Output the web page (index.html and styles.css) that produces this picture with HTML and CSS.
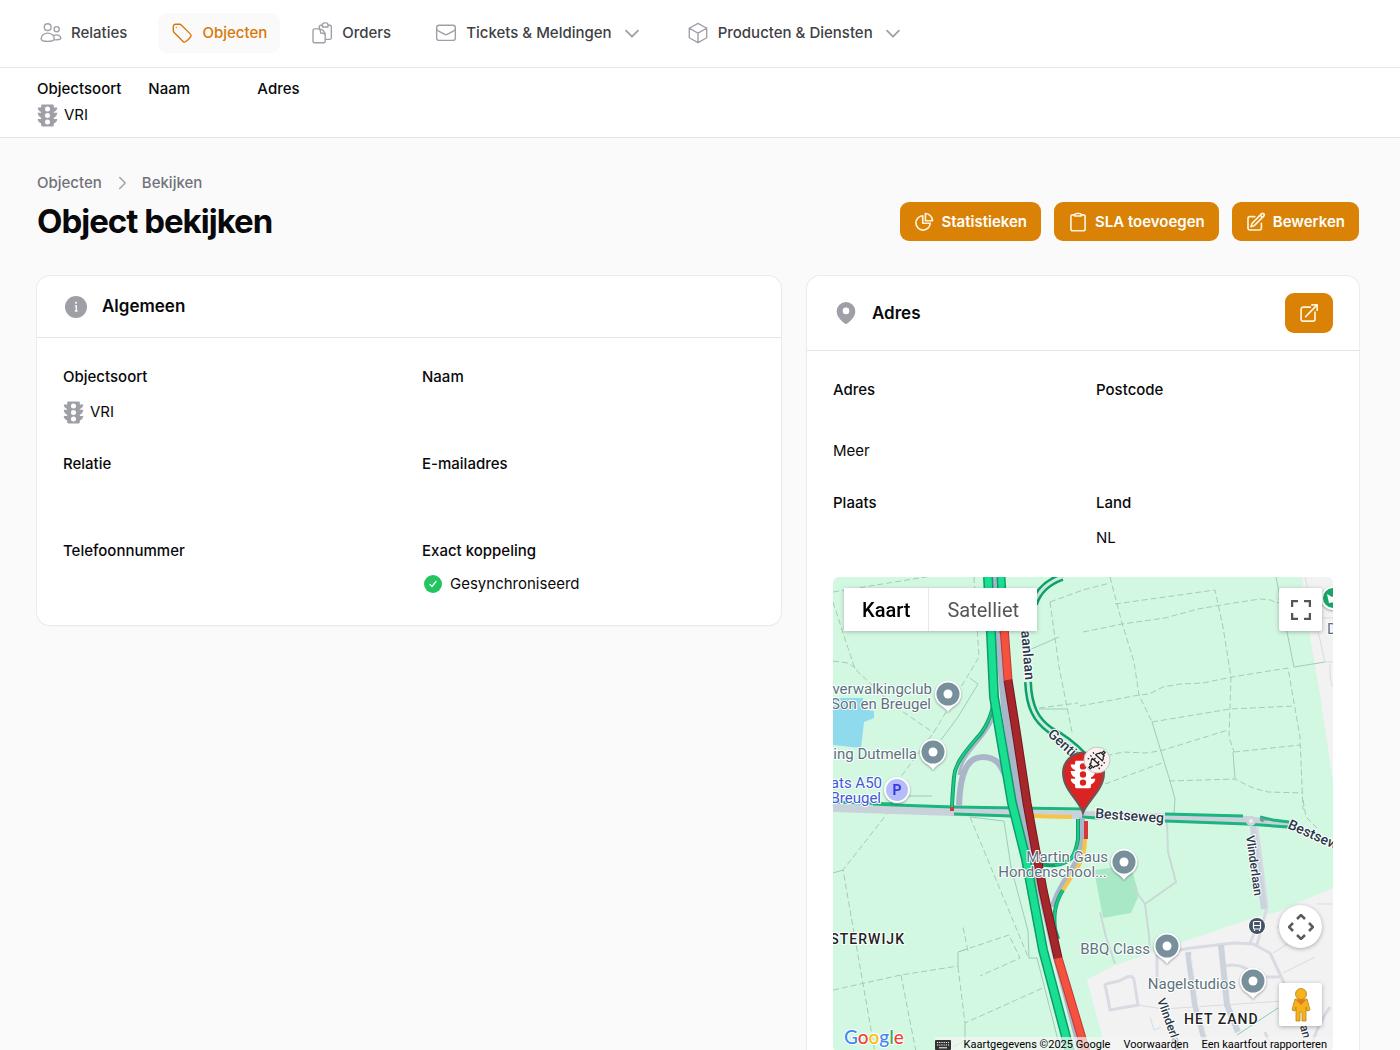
FILE: index.html
```html
<!DOCTYPE html>
<html lang="nl">
<head>
<meta charset="utf-8">
<meta name="viewport" content="width=device-width, initial-scale=1">
<title>Object bekijken</title>
<link rel="stylesheet" href="styles.css">
</head>
<body>
<svg class="sprite" aria-hidden="true">
  <symbol id="i-traffic" viewBox="3 2 18 20"><path fill="currentColor" fill-rule="evenodd" d="M20.500 9.500h-3V8.860c1.720-.450 3-2 3-3.860h-3V3.500c0-.550-.450-1-1-1h-9c-.550 0-1 .450-1 1V5h-3c0 1.860 1.280 3.410 3 3.860v.640h-3c0 1.860 1.280 3.910 3 4.360V15h-3c0 1.860 1.280 3.410 3 3.860v1.640c0 .550.450 1 1 1h9c.550 0 1-.450 1-1v-1.640c1.720-.450 3-2 3-3.860h-3v-1.140c1.720-.450 3-2.500 3-4.360zM12 19.800a2.200 2.200 0 1 1 0-4.400 2.200 2.200 0 0 1 0 4.400zm0-5.600a2.200 2.200 0 1 1 0-4.400 2.200 2.200 0 0 1 0 4.400zm0-5.600a2.200 2.200 0 1 1 0-4.400 2.200 2.200 0 0 1 0 4.400z"/></symbol>
  <symbol id="i-chevron" viewBox="0 0 24 24"><path d="m18.500 9.500-6.500 6.500-6.500-6.500"/></symbol>
  <symbol id="i-pin" viewBox="0 0 30 34"><path d="M15 1.500a13.500 13.500 0 0 0-8 24.200c3 2 6 4 8 7.300 2-3.300 5-5.300 8-7.300A13.500 13.500 0 0 0 15 1.500z" fill="#fff"/><circle cx="15" cy="15" r="11.500" fill="#78909c"/><circle cx="15" cy="15" r="4.500" fill="#fff"/></symbol>
</svg>

<header class="topbar">
  <nav class="nav">
    <a class="nav-item" href="#">
      <svg class="icon" viewBox="0 0 24 24"><circle cx="8.400" cy="5.600" r="3.700"/><circle cx="18.200" cy="7.800" r="2.800"/><path d="M1.200 18.200c0-3.600 3.300-6 7.200-6s7.200 2.400 7.200 6c0 1.800-3.500 2.900-7.200 2.900s-7.200-1.100-7.200-2.900zM15 14.600c4-1.600 7.800.4 7.800 3 0 1.300-2.800 2-7.300 1.900"/></svg>
      Relaties
    </a>
    <a class="nav-item is-active" href="#" aria-current="page">
      <svg class="icon" viewBox="0 0 24 24"><path d="M9.568 2.500H5A2.500 2.500 0 0 0 2.500 5v4.568c0 .597.237 1.170.659 1.591l10.081 10.081c.699.699 1.780.872 2.607.330a18.100 18.100 0 0 0 5.723-5.723c.542-.827.369-1.908-.330-2.607L11.160 3.160a2.250 2.250 0 0 0-1.592-.660zM5.800 5.800h.010"/></svg>
      Objecten
    </a>
    <a class="nav-item" href="#">
      <svg class="icon" viewBox="0 0 24 24"><path d="M9 7.500V5.200A1.700 1.700 0 0 1 10.700 3.500h1.800m6 0h2A1.700 1.700 0 0 1 22.200 5.200v12A1.700 1.700 0 0 1 20.500 18.900h-5M12.500 5.500v-2.300c0-1.200 1-2.200 2.200-2.200h1.600c1.200 0 2.200 1 2.200 2.200v2.300zM3.700 7.500h4.800c4 0 7 3.200 7 7v6.600a1.500 1.500 0 0 1-1.500 1.500H3.700a1.500 1.500 0 0 1-1.500-1.500V9a1.500 1.500 0 0 1 1.500-1.500zM9 7.700c1.400.7 1.500 1.800 1.500 4.300 2.500 0 4.200.2 5 2"/></svg>
      Orders
    </a>
    <a class="nav-item" href="#">
      <svg class="icon" viewBox="0 0 24 24"><rect x="1.800" y="3.500" width="20.400" height="16.500" rx="2.600"/><path d="M1.800 7.300c0 1 .400 1.500 1.200 2l7.700 4.300c.900.500 1.700.5 2.600 0L21 9.300c.800-.500 1.200-1 1.200-2"/></svg>
      Tickets &amp; Meldingen
      <svg class="icon chevron"><use href="#i-chevron"/></svg>
    </a>
    <a class="nav-item" href="#">
      <svg class="icon" viewBox="0 0 24 24"><path d="M21.500 6.800 12 1.500 2.500 6.800m19 0L12 12.200m9.500-5.400v10.400L12 22.600m-9.500-15.800L12 12.200M2.500 6.800v10.400L12 22.600m0-10.400v10.400"/></svg>
      Producten &amp; Diensten
      <svg class="icon chevron"><use href="#i-chevron"/></svg>
    </a>
  </nav>
</header>

<dl class="summary">
  <div><dt>Objectsoort</dt><dd><svg class="traffic"><use href="#i-traffic"/></svg>VRI</dd></div>
  <div class="summary-name"><dt>Naam</dt><dd></dd></div>
  <div><dt>Adres</dt><dd></dd></div>
</dl>

<main class="main">
  <div class="page-head">
    <div>
      <nav class="crumbs" aria-label="Kruimelpad">
        <a href="#">Objecten</a>
        <svg class="icon crumb-sep" viewBox="0 0 24 24"><path d="m9.500 6 6 6-6 6"/></svg>
        <a href="#">Bekijken</a>
      </nav>
      <h1>Object bekijken</h1>
    </div>
    <div class="actions">
      <button class="btn" type="button"><svg class="icon" viewBox="0 0 24 24"><path d="M10.500 4.500a8.600 8.600 0 1 0 9 9h-9zM13.700 1.800c4.800.200 8.400 4 8.500 8.700h-8.500z"/></svg>Statistieken</button>
      <button class="btn" type="button"><svg class="icon" viewBox="0 0 24 24"><path d="M8 3.500H5.700A2.200 2.200 0 0 0 3.500 5.700v14.600a2.200 2.200 0 0 0 2.200 2.200h12.600a2.200 2.200 0 0 0 2.200-2.200V5.700a2.200 2.200 0 0 0-2.200-2.200H16M8 4.800v-.500c0-1.600 1.200-2.500 2.500-2.500h3c1.300 0 2.500.900 2.500 2.500v.500z"/></svg>SLA toevoegen</button>
      <button class="btn" type="button"><svg class="icon" viewBox="0 0 24 24"><path d="m17 3.800 1.600-1.600a1.900 1.900 0 0 1 2.700 2.700L10.500 15.700a4.500 4.500 0 0 1-1.900 1.100L6 17.600l.8-2.700a4.500 4.500 0 0 1 1.100-1.900zm0 0 2.700 2.700M18.500 13.500v5.900a2.200 2.200 0 0 1-2.200 2.200H4.600a2.200 2.200 0 0 1-2.200-2.200V7.700a2.200 2.200 0 0 1 2.200-2.200h6"/></svg>Bewerken</button>
    </div>
  </div>

  <div class="columns">
    <section class="card">
      <header class="card-head">
        <svg class="head-icon" viewBox="0 0 26 26"><circle cx="13" cy="13" r="11" fill="currentColor"/><circle cx="13" cy="8.800" r="1" fill="#fff"/><path d="M11.800 11.800h1.500v5.200m-1.500 0h2.700" fill="none" stroke="#fff" stroke-width="1.300"/></svg>
        <h2>Algemeen</h2>
      </header>
      <dl class="fields">
        <div><dt>Objectsoort</dt><dd><svg class="traffic"><use href="#i-traffic"/></svg>VRI</dd></div>
        <div><dt>Naam</dt><dd></dd></div>
        <div><dt>Relatie</dt><dd></dd></div>
        <div><dt>E-mailadres</dt><dd></dd></div>
        <div><dt>Telefoonnummer</dt><dd></dd></div>
        <div><dt>Exact koppeling</dt><dd class="status"><svg class="check" viewBox="0 0 22 22"><circle cx="11" cy="11" r="9" fill="#22c55e"/><path d="m8 11.500 2 2 4-5" fill="none" stroke="#fff" stroke-width="1.300" stroke-linecap="round"/></svg>Gesynchroniseerd</dd></div>
      </dl>
    </section>

    <section class="card">
      <header class="card-head">
        <svg class="head-icon" viewBox="0 0 26 26"><path fill="currentColor" fill-rule="evenodd" d="M13 2a9.300 9.300 0 0 0-9.300 9.300C3.700 17 8 20.500 11.500 23.300c1 .8 2 .8 3 0C18 20.500 22.300 17 22.300 11.300A9.300 9.300 0 0 0 13 2zm0 12.200a3.300 3.300 0 1 1 0-6.600 3.300 3.300 0 0 1 0 6.600z"/></svg>
        <h2>Adres</h2>
        <a class="btn btn-open" href="#" aria-label="Openen in kaart"><svg class="icon" viewBox="0 0 24 24"><path d="M13.500 5H5a2.500 2.500 0 0 0-2.500 2.500v11.700A2.500 2.500 0 0 0 5 21.700h11.700a2.500 2.500 0 0 0 2.500-2.500V11M8 16.300 21.800 2.300m0 0h-6.300m6.300 0v6.300"/></svg></a>
      </header>
      <div class="address">
        <dl class="fields fields-flush">
          <div class="no-value"><dt>Adres</dt></div>
          <div class="no-value"><dt>Postcode</dt></div>
        </dl>
        <p class="more">Meer</p>
        <dl class="fields fields-flush">
          <div><dt>Plaats</dt><dd></dd></div>
          <div><dt>Land</dt><dd>NL</dd></div>
        </dl>
        <div class="map">
          <svg class="map-canvas" viewBox="0 0 500 475" preserveAspectRatio="xMidYMid slice">
            <rect width="500" height="475" fill="#d3f8e2"/>
            <!-- built-up land, park and water -->
            <path fill="#f3f2f3" d="M469 0 477 60 487 117 500 205V0zM500 311 444 335 414 343 280 389 254 403 269 458 272 475H500z"/>
            <path fill="#a9e8c6" d="M261 293 285 290 300 296 306 318 298 336 270 341z"/>
            <path fill="#90daee" d="M0 121H30V132L41 134V141L31 145 28 171 0 168z"/>
            <!-- field boundaries -->
            <g fill="none" stroke="#a3cbb8" stroke-width="1" stroke-dasharray="6 3">
              <path d="M0 15 105-2M0 25 13 65 22 92 60 128 101 156M0 84 15 86 25 93M141 0 146 80 137 95 101 155 64 205"/>
              <path d="M250 55 289 47 332 41 365 32 388 28 427 22 438 23 443 26 455 23 445 22M217 25 250 13 277 6M277 0 289 46 301 85 306 118 319 145M217 25 226 90 239 155M282 27 382 13 390 50 398 100 396 160 401 175M247 129 306 118 316 117 330 110 347 107 370 106 399 100 455 91 467 160 470 233M319 145 397 132 462 129M247 183 260 182 290 175 312 176 327 174 395 153M272 207 329 186M401 175 467 168M336 204 402 202 420 211 435 215 470 216M206 131 245 126"/>
              <path d="M57 233 10 293 42 475M137 240 196 382M135 374 130 350M128 374 176 358 187 381 147 399M0 413 68 398 125 389M68 398 83 475M125 390 132 446 212 410M470 223 473 240 485 252"/>
            </g>
            <g fill="none" stroke="#9ccdb9" stroke-width="1">
              <path d="M443 0 461 90 492 85M319 145 337 204 342 222 341 237M400 175 402 202M196 73 226 60M137 101 145 107 125 140 108 163M69 219H99M137 240 171 244 178 290 195 354 196 381H204L228 475M125 390V375L134 372M132 446V463L120 470M0 296 10 293M206 132H235"/>
            </g>
            <g fill="none" stroke="#cbd8d8" stroke-width="2">
              <path d="M334 245 335 275 343 305 312 327 316 358 317 374M312 327 300 310M267 335 273 360 282 387"/>
            </g>
            <!-- residential streets -->
            <g fill="none" stroke="#d8dbe2" stroke-width="3" stroke-linejoin="round">
              <path d="M286 404 273 407Q271 408 273 412L277 433 305 428 301 403Q300 398 294 400zM324 377V400L328 410M325 377 358 371 401 366 420 367 437 376 452 408M392 389Q408 385 422 398M433 400H450M417 366 424 350M424 368 434 330 424 250"/>
              <path stroke-width="1" d="M472 0 484 50 492 85M484 41H500M492 85H500M497 87Q496 102 500 110M305 428 330 432 450 424M440 376 459 364M450 396 482 380M444 350 459 345M484 327H500M317 440 321 453 328 450"/>
              <path d="M497 430Q480 455 478 475M432 455 440 475"/>
            </g>
            <g fill="none" stroke="#cdd3dc" stroke-width="6">
              <path d="M419 243 428 310 431 332M355 375 362 428 375 475M388 368 394 428 405 455"/>
            </g>
            <path d="M358 378 365 428 376 470" fill="none" stroke="#eceef1" stroke-width="1"/>
            <path d="M404 458 445 431" fill="none" stroke="#83cfb4" stroke-width="1"/>
            <!-- Bestseweg -->
            <path d="M0 231 120 235 250 238 414 243 456 248" fill="none" stroke="#c9d2db" stroke-width="8"/>
            <g fill="none" stroke="#1bb57f" stroke-width="3">
              <path d="M40 227 62 228 120 230 250 232M121 237 178 239 200 240M249 240 265 241M332 237 410 239M427 240 440 243 456 245M332 244 414 247 456 250"/>
              <path d="M0 225 60 227"/>
            </g>
            <circle cx="418" cy="244" r="5" fill="#cdd3dc"/><circle cx="418" cy="244" r="2" fill="#eceef1"/>
            <path d="M427 243h8m-8 0 3-2v4z" fill="#78909c" stroke="#78909c"/>
            <!-- slip roads -->
            <g fill="none" stroke="#abb5ca" stroke-width="6">
              <path d="M126 229C127 196 134 180 150 180 164 180 168 189 172 198"/>
              <path d="M163 130C162 145 150 158 146 163 133 178 128 185 126 198" stroke-width="3"/>
              <path d="M249 241V268C246 290 226 305 220 330"/>
            </g>
            <g fill="none" stroke="#0f9f6b" stroke-width="4">
              <path d="M161 120C160 140 150 155 143 162 130 177 122 188 121 200 120 212 119 225 119 231"/>
              <path d="M245 242V262C242 280 238 286 222 288Q210 289 204 285M230 313Q219 330 222 352L225 362"/>
              <path d="M229 0Q207 8 201 27M195 105C196 130 203 143 217 153Q236 163 250 178" stroke-width="8"/>
              <path d="M229 0Q207 8 201 27M195 105C196 130 203 143 217 153Q236 163 250 178" stroke="#c9eddd" stroke-width="3"/>
            </g>
            <path d="M161 120C160 140 150 155 143 162 130 177 122 188 121 200 120 212 119 225 119 231M245 242V262C242 280 238 286 222 288M230 313Q219 330 222 352" fill="none" stroke="#20c988" stroke-width="2"/>
            <path d="M253 244V262M117 232H121" stroke="#d5383a" stroke-width="4"/>
            <path d="M252 262Q252 278 246 288L230 313M199 239 239 240" fill="none" stroke="#f7c546" stroke-width="4"/>
            <!-- motorway -->
            <g fill="none">
              <path d="M162 0 166 60 172 130 187 226 205 300 222 373 249 475" stroke="#abb5ca" stroke-width="8"/>
              <path d="M155 0 158 56 161 120 167 156 179 226 193 282 210 373 237 475" stroke="#0e9c68" stroke-width="10"/>
              <path d="M155 0 158 56 161 120 167 156 179 226 193 282 210 373 237 475" stroke="#19df93" stroke-width="7"/>
              <path d="M168 0 171 56" stroke="#0e9c68" stroke-width="9"/><path d="M168 0 171 56" stroke="#19df93" stroke-width="6"/>
              <path d="M171 50 175 103M225 381 234 411 253 475" stroke="#bd3a38" stroke-width="9"/><path d="M171 50 175 103M225 381 234 411 253 475" stroke="#f5513f" stroke-width="7"/>
              <path d="M175 103 184 160 194 226 210 313 225 381" stroke="#74171d" stroke-width="9"/><path d="M175 103 184 160 194 226 210 313 225 381" stroke="#a5262b" stroke-width="7"/>
            </g>
            <!-- place labels -->
            <g class="poi">
              <text x="99" y="117" text-anchor="end">verwalkingclub</text>
              <text x="98" y="132" text-anchor="end">Son en Breugel</text>
              <text x="84" y="182" text-anchor="end">ing Dutmella</text>
              <text x="275" y="285" text-anchor="end">Martin Gaus</text>
              <text x="274" y="300" text-anchor="end">Hondenschool...</text>
              <text x="317" y="377" text-anchor="end">BBQ Class</text>
              <text x="403" y="412" text-anchor="end">Nagelstudios</text>
              <g class="poi-blue"><text x="49" y="211" text-anchor="end">ats A50</text><text x="48" y="226" text-anchor="end">Breugel</text></g>
            </g>
            <g class="street">
              <text transform="translate(188 54) rotate(85)">aanlaan</text>
              <text transform="translate(214 158) rotate(43)">Gentia</text>
              <text transform="translate(262 241) rotate(4)">Bestseweg</text>
              <text transform="translate(454 251) rotate(24)">Bestseweg</text>
              <g class="street-sm"><text transform="translate(413 259) rotate(82)">Vlinderlaan</text>
              <text transform="translate(324 423) rotate(70)">Vlinderlaan</text>
              <text transform="translate(464 440) rotate(74)">laan</text></g>
            </g>
            <g class="district"><text x="72" y="367" text-anchor="end">OOSTERWIJK</text><text x="351" y="447">HET ZAND</text></g>
            <text x="494" y="57" class="poi">D</text>
            <g class="pins">
              <use href="#i-pin" x="100" y="102" width="30" height="34"/>
              <use href="#i-pin" x="85" y="160" width="30" height="34"/>
              <use href="#i-pin" x="276" y="270" width="30" height="34"/>
              <use href="#i-pin" x="319" y="354" width="30" height="34"/>
              <use href="#i-pin" x="405" y="389" width="30" height="34"/>
              <circle cx="64" cy="213" r="13" fill="#fff"/><circle cx="64" cy="213" r="11" fill="#b5bdfb"/>
              <circle cx="500" cy="21" r="12" fill="#fff"/><circle cx="500" cy="21" r="10" fill="#17a567"/><path d="m494 17 5 3 3-2v7l-6 1z" fill="#fff"/>
            </g>
            <text x="64" y="218" class="parking" text-anchor="middle">P</text>
            <circle cx="424" cy="349" r="9" fill="#fff"/><circle cx="424" cy="349" r="8" fill="#455368"/>
            <rect x="420.500" y="344.500" width="7" height="7.500" rx="1" fill="none" stroke="#fff" stroke-width="1.200"/><path d="M421 348.500h6.500m-6 4v1.500m5-1.500v1.500" stroke="#fff" stroke-width="1.200"/>
            <!-- object marker -->
            <path d="M250 236C247 224 230 213 230 196A20 20 0 0 1 271 196C271 213 254 224 250 236z" fill="#da2323" stroke="#67585a" stroke-width="2"/>
            <use href="#i-traffic" x="237" y="183" width="26" height="29" color="#fff"/>
            <circle cx="264" cy="183" r="13" fill="#f9f0ef" stroke="#bcc8c2" stroke-width="1"/>
            <g transform="translate(264 183) rotate(-48)" fill="none" stroke="#222" stroke-width="1.300" stroke-linejoin="round"><path d="M-11-1h3v2h-3zM8-1h3v2H8zM-8-2.500h2c1-1.500 2-2 4-2v9c-2 0-3-.500-4-2h-2zM8-2.500H6.500C5.500-4 4.500-4.500 3-4.500v9c1.500 0 2.500-.500 3.500-2H8zM-2-2.500h2.500M-2 2.500h2.500"/><path d="M-1-8v1.500M3-8 2.500-6.500M-5-8l.5 1.500M-1 8V6.500M3 8l-.5-1.500M-5 8l.5-1.500"/></g>
            <text x="11" y="467" class="google"><tspan fill="#4285f4">G</tspan><tspan fill="#ea4335">o</tspan><tspan fill="#fbbc05">o</tspan><tspan fill="#4285f4">g</tspan><tspan fill="#34a853">l</tspan><tspan fill="#ea4335">e</tspan></text>
          </svg>
          <div class="map-types">
            <button type="button" class="is-on" aria-pressed="true">Kaart</button>
            <button type="button" aria-pressed="false">Satelliet</button>
          </div>
          <button class="map-btn map-full" type="button" aria-label="Volledig scherm"><svg viewBox="0 0 20 20"><path d="M1 7V1h6M13 1h6v6M19 13v6h-6M7 19H1v-6" fill="none" stroke="#555" stroke-width="2.500"/></svg></button>
          <div class="map-tools">
            <button class="map-btn map-round" type="button" aria-label="Camerabediening"><svg viewBox="0 0 26 26"><path d="m9 5 4-4 4 4M9 21l4 4 4-4M5 9l-4 4 4 4M21 9l4 4-4 4" fill="none" stroke="#5b5b5b" stroke-width="2.500"/></svg></button>
            <button class="map-btn" type="button" aria-label="Street View"><svg class="pegman" viewBox="0 0 20 34"><path d="M4 11h12l3 11-3 1-1-4v14h-4v-9H9v9H5V19l-1 4-3-1z" fill="#f6b21a" stroke="#b98219" stroke-width=".8"/><circle cx="10" cy="6" r="5.500" fill="#f6b21a" stroke="#b98219" stroke-width=".8"/><path d="M5 12h10l-5 5z" fill="#e87722"/></svg></button>
          </div>
          <div class="map-legal">
            <svg class="keyboard" viewBox="0 0 16 10"><rect width="16" height="10" rx="1" fill="#333"/><path d="M2 2.500h12M2 5h12" stroke="#fff" stroke-width="1.200" stroke-dasharray="1.200 1"/><path d="M4 7.800h8" stroke="#fff"/></svg>
            <span>Kaartgegevens ©2025 Google</span>
            <a href="#">Voorwaarden</a>
            <a href="#">Een kaartfout rapporteren</a>
          </div>
        </div>
      </div>
    </section>
  </div>
</main>
</body>
</html>
```
FILE: styles.css
```css
* { box-sizing: border-box; }
body {
  margin: 0;
  height: 100vh;
  display: flex;
  flex-direction: column;
  background: #fafafa;
  color: #09090b;
  font: 15px/26px Inter, "Liberation Sans", sans-serif;
}
dl, dd, p, h1, h2 { margin: 0; }
a { color: inherit; text-decoration: none; }
button { font: inherit; border: 0; cursor: pointer; }
.sprite { position: absolute; width: 0; height: 0; }
.icon {
  width: 22px;
  height: 22px;
  flex: none;
  fill: none;
  stroke: currentColor;
  stroke-width: 1.5;
  stroke-linecap: round;
  stroke-linejoin: round;
}

.topbar { flex: none; background: #fff; border-bottom: 1px solid #e8e8ea; padding: 13px 27px 14px; }
.nav { display: flex; gap: 18px; }
.nav-item {
  display: flex;
  align-items: center;
  gap: 9px;
  height: 40px;
  padding: 0 13px;
  border-radius: 9px;
  font-weight: 500;
  color: #3f3f46;
  white-space: nowrap;
}
.nav-item .icon { color: #9f9fa8; }
.nav-item .chevron { stroke-width: 2; width: 22px; height: 22px; }
.nav-item.is-active, .nav-item.is-active .icon { color: #d97706; }
.nav-item.is-active { background: #fafafa; }

.summary {
  flex: none;
  display: flex;
  gap: 27px;
  padding: 8px 37px 9px;
  background: #fff;
  border-bottom: 1px solid #e4e4e7;
}
.summary-name { min-width: 82px; }
dt { font-weight: 500; }
dd { display: flex; align-items: center; min-height: 26px; }
.traffic { width: 21px; height: 23px; margin-right: 6px; color: #9f9fa8; }

.main {
  flex: 1;
  min-height: 0;
  overflow-y: auto;
  scrollbar-width: none;
  padding: 34px 41px 34px 37px;
}
.page-head { display: flex; justify-content: space-between; align-items: flex-end; margin-bottom: 35px; }
.crumbs { display: flex; align-items: center; gap: 9px; line-height: 22px; font-weight: 500; color: #71717a; margin-bottom: 8px; }
.crumb-sep { color: #9f9fa8; }
h1 { font-size: 33px; line-height: 39px; font-weight: 700; letter-spacing: -1px; }
.actions { display: flex; gap: 13px; }
.btn {
  display: flex;
  align-items: center;
  gap: 7px;
  height: 39px;
  padding: 0 14px;
  border-radius: 9px;
  background: #d98206;
  color: #fff;
  font-weight: 600;
}
.btn .icon { width: 20px; height: 20px; color: #fff3dc; stroke-width: 2; }

.columns { display: grid; grid-template-columns: 31fr 23fr; gap: 26px; align-items: start; }
.card { background: #fff; border-radius: 13px; box-shadow: 0 0 0 1px #ececee, 0 1px 2px rgba(0, 0, 0, .08); }
.card-head { display: flex; align-items: center; gap: 13px; padding: 17px 26px; border-bottom: 1px solid #e4e4e7; }
.head-icon { width: 26px; height: 26px; color: #9f9fa8; }
h2 { font-size: 17px; line-height: 27px; font-weight: 600; }
.btn-open { margin-left: auto; height: 40px; }
.fields { display: grid; grid-template-columns: 1fr 1fr; gap: 26px; padding: 26px; }
.fields dd { margin-top: 9px; }
.fields-flush { padding: 0; }
.no-value { padding-bottom: 9px; }
.status { align-items: flex-start; line-height: 22px; gap: 6px; }
.check { width: 22px; height: 22px; }
.address { display: grid; gap: 26px; padding: 26px; }

.map { position: relative; height: 475px; border-radius: 6px; overflow: hidden; font-family: Roboto, sans-serif; }
.map-canvas { display: block; width: 100%; height: 100%; }
.map-canvas text { font-family: Roboto, sans-serif; paint-order: stroke; stroke: #fff; stroke-width: 2px; stroke-linejoin: round; }
.poi { font-size: 15px; fill: #5b737d; }
.poi-blue { fill: #4355d8; }
.street { font-size: 14px; font-weight: 500; fill: #283849; }
.street-sm { font-size: 12px; }
.district { font-size: 14px; font-weight: 500; letter-spacing: 1px; fill: #222; }
.parking { font-size: 14px; font-weight: 700; fill: #3c35e0; }
.pins { filter: drop-shadow(0 1px 1px rgba(0, 0, 0, .35)); }
.map-canvas .parking { stroke: none; }
.map-canvas .google { font-family: Lato, sans-serif; font-size: 19px; font-weight: 500; }
.map-types { position: absolute; left: 11px; top: 11px; display: flex; background: #fff; box-shadow: 0 1px 4px rgba(0, 0, 0, .25); }
.map-types button { height: 43px; padding: 0 18px; background: none; font-size: 20px; color: #565656; }
.map-types button + button { border-left: 1px solid #e8e8e8; }
.map-types .is-on { color: #000; font-weight: 500; }
.map-btn {
  display: grid;
  place-items: center;
  width: 43px;
  height: 43px;
  padding: 0;
  background: #fff;
  border-radius: 2px;
  box-shadow: 0 1px 4px rgba(0, 0, 0, .3);
}
.map-btn svg { width: 20px; height: 20px; }
.map-full { position: absolute; top: 11px; right: 11px; }
.map-tools { position: absolute; right: 11px; bottom: 26px; display: grid; gap: 35px; }
.map-round { border-radius: 50%; }
.map-round svg { width: 26px; height: 26px; }
.map-btn .pegman { width: 20px; height: 34px; }
.map-legal {
  position: absolute;
  right: 0;
  bottom: 0;
  display: flex;
  align-items: center;
  gap: 13px;
  padding: 0 6px 0 0;
  background: rgba(245, 245, 245, .7);
  font-size: 11px;
  line-height: 15px;
  color: #000;
}
.keyboard { width: 16px; height: 10px; }
```
